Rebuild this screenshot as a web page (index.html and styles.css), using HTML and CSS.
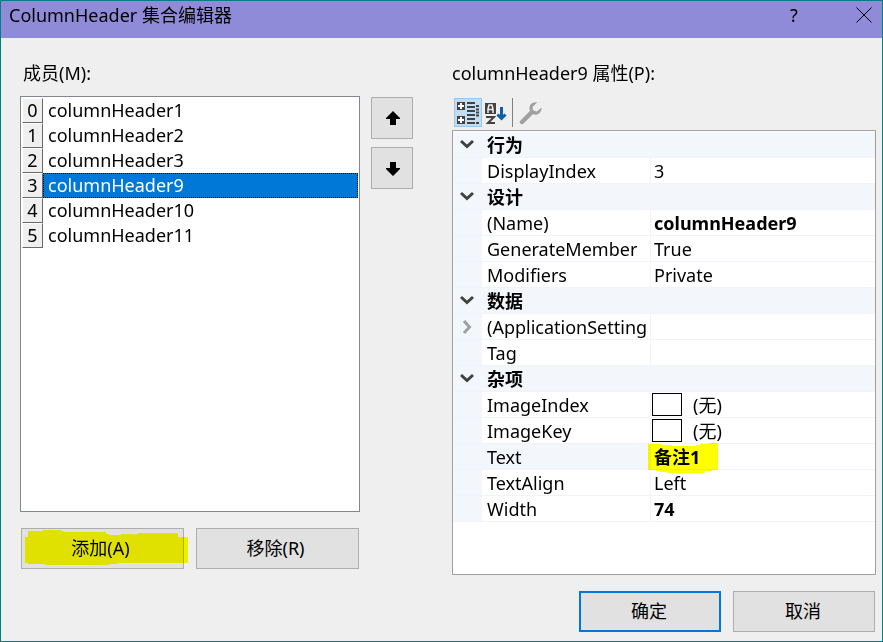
FILE: index.html
```html
<!DOCTYPE html>
<html lang="zh-CN">
<head>
    <meta charset="UTF-8">
    <meta name="viewport" content="width=device-width, initial-scale=1.0">
    <title>ColumnHeader 集合编辑器</title>
    <link rel="stylesheet" href="styles.css">
</head>
<body>
    <div class="dialog">
        <header class="titlebar">
            <h1>ColumnHeader 集合编辑器</h1>
            <button type="button" class="title-btn" aria-label="帮助">?</button>
            <button type="button" class="title-btn" aria-label="关闭">
                <svg width="16" height="16" viewBox="0 0 16 16"><path d="M.5.5l15 15M15.5.5l-15 15" stroke="#000" fill="none"/></svg>
            </button>
        </header>

        <main class="content">
            <section class="members">
                <h2 id="members-label">成员(M):</h2>
                <ul class="member-list" role="listbox" aria-labelledby="members-label" tabindex="0">
                    <li role="option"><span class="index">0</span><span class="name">columnHeader1</span></li>
                    <li role="option"><span class="index">1</span><span class="name">columnHeader2</span></li>
                    <li role="option"><span class="index">2</span><span class="name">columnHeader3</span></li>
                    <li role="option" class="selected" aria-selected="true"><span class="index">3</span><span class="name">columnHeader9</span></li>
                    <li role="option"><span class="index">4</span><span class="name">columnHeader10</span></li>
                    <li role="option"><span class="index">5</span><span class="name">columnHeader11</span></li>
                </ul>
                <div class="member-actions">
                    <button type="button" class="btn">添加(A)
                        <svg class="marker" width="163" height="36" viewBox="0 0 163 36"><path d="M0 7h3V1h15V0h18v1h3v1h42v2h3v1h12V4h13v1h1V4h3V3h40v4h10v26H92v1h-8v1H20v-1H3v-1H0z" fill="#ff0"/></svg>
                    </button>
                    <button type="button" class="btn">移除(R)</button>
                </div>
            </section>

            <div class="order">
                <button type="button" class="btn" aria-label="上移">
                    <svg width="16" height="16" viewBox="0 0 16 16"><path d="M9 1l7 7v1h-4v6H6V9H2V8z"/></svg>
                </button>
                <button type="button" class="btn" aria-label="下移">
                    <svg width="16" height="16" viewBox="0 0 16 16"><path d="M9 16l7-7V8h-4V2H6v6H2v1z"/></svg>
                </button>
            </div>

            <section class="properties">
                <h2>columnHeader9 属性(P):</h2>
                <div class="toolbar">
                    <button type="button" class="tool active" aria-label="按分类顺序">
                        <svg width="24" height="24" viewBox="0 0 24 24">
                            <path d="M1 1h8v8H1zM1 15h8v8H1z" fill="#424242"/>
                            <path d="M5 2v6M2 5h6M5 16v6M2 19h6" stroke="#fff" stroke-width="2"/>
                            <path d="M11 2h8M11 6h8M11 10h8M11 14h8M11 18h8M11 22h8M20 5h3M20 8.500h3M20 11.500h3M20 14.500h3M20 22h3" stroke="#424242" stroke-width="2"/>
                        </svg>
                    </button>
                    <button type="button" class="tool" aria-label="按字母顺序">
                        <svg width="24" height="24" viewBox="0 0 24 24">
                            <path d="M1 2h11v11H1z" fill="#424242"/>
                            <path d="M4 12V8l1-4h3l1 4v4M4 8.500h5" stroke="#eee" stroke-width="1.500" fill="none"/>
                            <path d="M2 16h8l-6 6h7" stroke="#424242" stroke-width="2" fill="none"/>
                            <path d="M17.500 6v11M13.500 13.500l4 4 4-4" stroke="#0d5fa8" stroke-width="3" fill="none"/>
                        </svg>
                    </button>
                    <span class="divider"></span>
                    <button type="button" class="tool" aria-label="属性页" disabled>
                        <svg width="24" height="24" viewBox="0 0 24 24">
                            <path d="M3 21L13 11" stroke="#a0a0a0" stroke-width="4.500" stroke-linecap="round"/>
                            <path d="M18 1.500c-4-1-8 2-7.500 6.500.3 4 4 6.500 7.500 5.500 3-.7 5-4 4.500-7l-4.500 4-4-1-.5-3.500z" fill="#a0a0a0"/>
                        </svg>
                    </button>
                </div>

                <div class="grid">
                    <table>
                        <colgroup><col class="col-gutter"><col class="col-name"><col></colgroup>
                        <tbody>
                            <tr class="category">
                                <td><svg class="chevron" viewBox="0 0 14 14"><path d="M1 3l6 5.500L13 3"/></svg></td>
                                <th colspan="2">行为</th>
                            </tr>
                            <tr><td></td><th>DisplayIndex</th><td>3</td></tr>
                            <tr class="category">
                                <td><svg class="chevron" viewBox="0 0 14 14"><path d="M1 3l6 5.500L13 3"/></svg></td>
                                <th colspan="2">设计</th>
                            </tr>
                            <tr><td></td><th>(Name)</th><td><b>columnHeader9</b></td></tr>
                            <tr><td></td><th>GenerateMember</th><td>True</td></tr>
                            <tr><td></td><th>Modifiers</th><td>Private</td></tr>
                            <tr class="category">
                                <td><svg class="chevron" viewBox="0 0 14 14"><path d="M1 3l6 5.500L13 3"/></svg></td>
                                <th colspan="2">数据</th>
                            </tr>
                            <tr>
                                <td><svg class="chevron closed" viewBox="0 0 14 14"><path d="M4 1l5.500 6L4 13"/></svg></td>
                                <th>(ApplicationSetting</th><td></td>
                            </tr>
                            <tr><td></td><th>Tag</th><td></td></tr>
                            <tr class="category">
                                <td><svg class="chevron" viewBox="0 0 14 14"><path d="M1 3l6 5.500L13 3"/></svg></td>
                                <th colspan="2">杂项</th>
                            </tr>
                            <tr><td></td><th>ImageIndex</th><td class="image-value"><div><span class="swatch"></span>(无)</div></td></tr>
                            <tr><td></td><th>ImageKey</th><td class="image-value"><div><span class="swatch"></span>(无)</div></td></tr>
                            <tr class="current">
                                <td></td><th>Text</th>
                                <td>
                                    <div class="marked"><b>备注1</b>
                                        <svg class="marker" width="70" height="30" viewBox="0 0 70 30"><path d="M0 1h14v1h10v1h24V2h4V1h9V0h9v27h-6v1h-7v2H19v-1h-7v-1H8v-1H0z" fill="#ff0"/></svg>
                                    </div>
                                </td>
                            </tr>
                            <tr><td></td><th>TextAlign</th><td>Left</td></tr>
                            <tr><td></td><th>Width</th><td><b>74</b></td></tr>
                        </tbody>
                    </table>
                </div>
            </section>
        </main>

        <footer class="footer">
            <button type="button" class="btn primary">确定</button>
            <button type="button" class="btn">取消</button>
        </footer>
    </div>
</body>
</html>
```
FILE: styles.css
```css
* {
    box-sizing: border-box;
}
body {
    margin: 0;
    font-family: "Noto Sans", "Noto Sans CJK SC", sans-serif;
    font-size: 18px;
    line-height: 24px;
    color: #000;
}
.dialog {
    display: flex;
    flex-direction: column;
    min-height: 100vh;
    background-color: #efefef;
    border: 1px solid #008080;
}

/* title bar */
.titlebar {
    display: flex;
    align-items: center;
    height: 37px;
    padding: 0 0 9px 8px;
    background-color: #908bd9;
}
h1, h2 {
    margin: 0;
    font-size: 18px;
    font-weight: normal;
    line-height: 24px;
}
h1 {
    flex: 1;
}
.title-btn {
    display: flex;
    align-items: center;
    justify-content: center;
    width: 36px;
    margin-left: 34px;
    padding: 0;
    border: none;
    background: none;
    font: inherit;
    color: #000;
}

/* main area */
.content {
    flex: 1;
    display: grid;
    grid-template-columns: 85fr 92px 106fr;
    padding: 23px 6px 0 19px;
}
h2 {
    height: 35px;
}
.members {
    display: flex;
    flex-direction: column;
    min-width: 0;
    padding-bottom: 6px;
}
.members h2 {
    padding-left: 3px;
}
.member-list {
    flex: 1;
    margin: 0;
    padding: 1px;
    list-style: none;
    background-color: #fff;
    border: 1px solid #828790;
    outline: none;
}
.member-list li {
    display: flex;
    height: 25px;
    line-height: 22px;
}
.index {
    width: 21px;
    background-color: #efefef;
    border: 1px solid #fff;
    border-right-color: #696969;
    border-bottom-color: #696969;
    text-align: center;
}
.name {
    flex: 1;
    padding-left: 4px;
    border: 1px solid transparent;
}
.selected .name {
    background-color: #0078d7;
    border: 1px dotted #000;
    color: #fff;
}
.btn {
    position: relative;
    padding: 0 0 2px;
    background-color: #e1e1e1;
    border: 1px solid #adadad;
    font: inherit;
    color: #000;
}
.member-actions {
    display: flex;
    gap: 12px;
    padding: 16px 1px 0;
}
.member-actions .btn {
    flex: 1;
    height: 41px;
    padding-right: 4px;
}

/* move up / move down */
.order {
    display: flex;
    flex-direction: column;
    gap: 8px;
    width: 42px;
    margin-left: 11px;
    padding-top: 36px;
}
.order .btn {
    display: flex;
    align-items: center;
    justify-content: center;
    height: 42px;
    padding: 0;
}

/* highlighter strokes */
.marker {
    position: absolute;
    top: 1px;
    left: 3px;
    mix-blend-mode: multiply;
    pointer-events: none;
}
.marked {
    position: relative;
}
.marked .marker {
    top: -2px;
    left: -6px;
}

/* property grid */
.properties {
    display: flex;
    flex-direction: column;
    min-width: 0;
}
.toolbar {
    display: flex;
    height: 34px;
    padding: 2px 2px 0;
}
.tool {
    display: flex;
    align-items: center;
    justify-content: center;
    width: 28px;
    height: 29px;
    padding: 0;
    background: none;
    border: 1px solid transparent;
}
.tool.active {
    background-color: #c2dcf2;
    border-color: #90c8f6;
}
.divider {
    width: 1px;
    height: 29px;
    margin: 0 4px 0 2px;
    background-color: #808080;
}
.grid {
    flex: 1;
    padding-top: 1px;
    background-color: #fff;
    border: 1px solid #a0a0a0;
}
table {
    width: 100%;
    table-layout: fixed;
    border-collapse: separate;
    border-spacing: 0;
}
.col-gutter {
    width: 29px;
}
.col-name {
    width: 169px;
}
td, th {
    height: 26px;
    padding: 0 0 0 3px;
    border-bottom: 1px solid #f0f3f9;
    font-weight: normal;
    text-align: left;
    white-space: nowrap;
}
th {
    padding: 0 1px 0 5px;
    border-right: 1px solid #f0f3f9;
    overflow: hidden;
}
td:first-child {
    padding: 0 0 0 7px;
}
td:first-child,
.category th,
.current th {
    background-color: #f3f6fb;
}
.category th {
    font-weight: bold;
}
.chevron {
    display: block;
    width: 14px;
    height: 14px;
    fill: none;
    stroke: #404040;
    stroke-width: 3;
}
.chevron.closed {
    stroke: #a0a0a0;
}
.image-value {
    padding-left: 1px;
}
.image-value div {
    display: flex;
    align-items: center;
    gap: 11px;
}
.swatch {
    width: 30px;
    height: 23px;
    background-color: #fff;
    border: 1px solid #000;
}

/* footer */
.footer {
    display: flex;
    justify-content: flex-end;
    gap: 12px;
    padding: 16px 7px 9px;
}
.footer .btn {
    width: 142px;
    height: 41px;
    padding-right: 2px;
}
.footer .primary {
    border: 2px solid #0078d7;
}
```
